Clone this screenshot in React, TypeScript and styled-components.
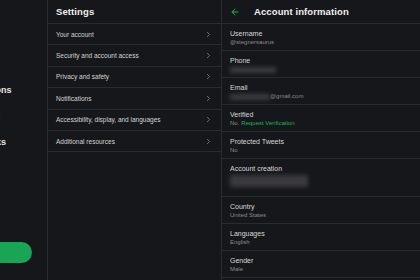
import React from 'react';
import styled, { createGlobalStyle } from 'styled-components';
import { ChevronRight, ArrowLeft } from 'lucide-react';

const GlobalStyle = createGlobalStyle`
  html, body {
    margin: 0;
    padding: 0;
    background: #16171a;
  }
  body {
    font-family: 'Liberation Sans', Arial, sans-serif;
    color: #d8d8d8;
  }
`;

const Page = styled.div`
  width: 420px;
  height: 280px;
  display: grid;
  grid-template-columns: 48px 174px 198px;
  background: #16171a;
  overflow: hidden;
`;

const SideNav = styled.nav`
  border-right: 1px solid #2a2b2f;
  overflow: hidden;
  display: flex;
  flex-direction: column;
`;

// the nav is scrolled off to the left, only the word endings show
const NavList = styled.div`
  margin-left: -43px;
  padding-top: 83px;
  display: flex;
  flex-direction: column;
`;

const NavItem = styled.div`
  height: 26px;
  font-size: 9px;
  font-weight: 700;
  color: #e6e6e6;
  white-space: nowrap;
  line-height: 14px;
`;

const TweetButton = styled.div`
  margin-top: auto;
  margin-bottom: 17px;
  width: 32px;
  height: 21px;
  background: #18a554;
  border-radius: 0 11px 11px 0;
`;

const Column = styled.section<{ $divider?: boolean }>`
  display: flex;
  flex-direction: column;
  border-right: ${(p) => (p.$divider ? '1px solid #2a2b2f' : 'none')};
`;

const Header = styled.header`
  height: 24px;
  box-sizing: border-box;
  border-bottom: 1px solid #2a2b2f;
  display: flex;
  align-items: center;
  padding: 0 8px;
  gap: 14px;
`;

const Title = styled.h1`
  margin: 0;
  font-size: 9.5px;
  font-weight: 700;
  color: #f0f0f0;
  letter-spacing: 0.1px;
`;

const MenuRow = styled.div`
  height: 21.4px;
  box-sizing: border-box;
  border-bottom: 1px solid #2a2b2f;
  display: flex;
  align-items: center;
  justify-content: space-between;
  padding: 0 8px 0 8px;
  font-size: 6.5px;
  color: #d4d4d4;
`;

const InfoRow = styled.div<{ $tall?: boolean }>`
  height: ${(p) => (p.$tall ? 38 : 27)}px;
  box-sizing: border-box;
  border-bottom: 1px solid #2a2b2f;
  padding: 5px 7px 0 8px;
  display: flex;
  flex-direction: column;
`;

const Label = styled.div`
  font-size: 7px;
  line-height: 9px;
  color: #d8d8d8;
`;

const Value = styled.div`
  font-size: 6px;
  line-height: 8px;
  color: #8c8c8c;
  display: flex;
  align-items: center;
`;

const Link = styled.span`
  color: #1fb35f;
  margin-left: 2px;
`;

const Blur = styled.span<{ $w: number; $h: number }>`
  display: inline-block;
  width: ${(p) => p.$w}px;
  height: ${(p) => p.$h}px;
  margin-top: 2px;
  background: #3b3b3d;
  filter: blur(2px);
`;

const menu = [
  'Your account',
  'Security and account access',
  'Privacy and safety',
  'Notifications',
  'Accessibility, display, and languages',
  'Additional resources',
];

export default function App() {
  return (
    <Page>
      <GlobalStyle />
      <SideNav>
        <NavList>
          <NavItem>Notifications</NavItem>
          <NavItem>Messages</NavItem>
          <NavItem>Bookmarks</NavItem>
        </NavList>
        <TweetButton />
      </SideNav>

      <Column $divider>
        <Header>
          <Title>Settings</Title>
        </Header>
        {menu.map((m) => (
          <MenuRow key={m}>
            <span>{m}</span>
            <ChevronRight size={9} color="#8a8a8a" strokeWidth={2} />
          </MenuRow>
        ))}
      </Column>

      <Column>
        <Header>
          <ArrowLeft size={10} color="#1fb35f" strokeWidth={2.4} />
          <Title>Account information</Title>
        </Header>
        <InfoRow>
          <Label>Username</Label>
          <Value>@stegnersaurus</Value>
        </InfoRow>
        <InfoRow>
          <Label>Phone</Label>
          <Value>
            <Blur $w={46} $h={6} />
          </Value>
        </InfoRow>
        <InfoRow>
          <Label>Email</Label>
          <Value>
            <Blur $w={40} $h={6} />
            <span>@gmail.com</span>
          </Value>
        </InfoRow>
        <InfoRow>
          <Label>Verified</Label>
          <Value>
            No.<Link>Request Verification</Link>
          </Value>
        </InfoRow>
        <InfoRow>
          <Label>Protected Tweets</Label>
          <Value>No</Value>
        </InfoRow>
        <InfoRow $tall>
          <Label>Account creation</Label>
          <Value>
            <Blur $w={78} $h={12} />
          </Value>
        </InfoRow>
        <InfoRow>
          <Label>Country</Label>
          <Value>United States</Value>
        </InfoRow>
        <InfoRow>
          <Label>Languages</Label>
          <Value>English</Value>
        </InfoRow>
        <InfoRow>
          <Label>Gender</Label>
          <Value>Male</Value>
        </InfoRow>
      </Column>
    </Page>
  );
}
